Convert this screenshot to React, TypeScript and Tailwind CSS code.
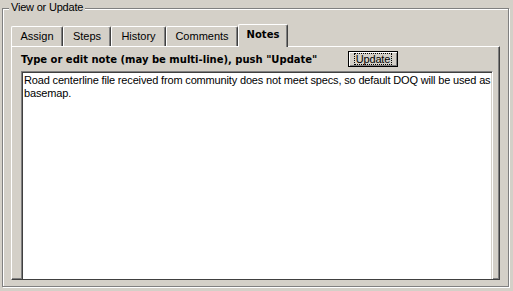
import React from "react";

const tabs = [
  { label: "Assign", w: "w-[52px]" },
  { label: "Steps", w: "w-[48px]" },
  { label: "History", w: "w-[55px]" },
  { label: "Comments", w: "w-[72px]" },
];

export default function App() {
  return (
    <div className="w-[513px] h-[291px] bg-[#d4d0c8] pt-[8px] pl-[2px] font-['Liberation_Sans',Arial,sans-serif] text-[11px] leading-[13px] text-black">
      {/* group box */}
      <div className="relative w-[507px] h-[279px] border border-[#808080] shadow-[inset_1px_1px_0_#fff,1px_1px_0_#fff]">
        <span className="absolute left-[6px] -top-[8px] bg-[#d4d0c8] px-[2px] tracking-[-0.2px]">View or Update</span>

        {/* tab strip */}
        <div className="ml-[8px] mt-[15px] flex items-end h-[22px]">
          {tabs.map((t) => (
            <div
              key={t.label}
              className={`${t.w} h-[20px] flex justify-center pt-[3px] border-l border-t border-r border-l-white border-t-white border-r-[#404040] rounded-t-[2px] shadow-[inset_-1px_0_0_#808080]`}
            >
              {t.label}
            </div>
          ))}
          <div className="relative z-10 -mb-px w-[50px] h-[23px] flex justify-center pt-[3px] font-['DejaVu_Sans',sans-serif] text-[10px] font-bold bg-[#d4d0c8] border-l border-t border-r border-l-white border-t-white border-r-[#404040] rounded-t-[2px] shadow-[inset_-1px_0_0_#808080]">
            Notes
          </div>
        </div>

        {/* tab panel */}
        <div className="ml-[8px] w-[489px] h-[234px] overflow-hidden border border-l-white border-t-white border-r-[#404040] border-b-[#404040] shadow-[inset_-1px_-1px_0_#808080]">
          <div className="mt-[4px] ml-[9px] flex items-center h-[16px]">
            <span className="w-[327px] pt-[1px] font-['DejaVu_Sans',sans-serif] text-[10px] font-bold whitespace-nowrap">
              Type or edit note (may be multi-line), push "Update"
            </span>
            <button className="w-[50px] h-[16px] flex items-center justify-center border border-black bg-[#d4d0c8] shadow-[inset_1px_1px_0_#fff,inset_-1px_-1px_0_#808080]">
              <span className="border border-dotted border-black px-[1px] leading-[10px] tracking-[-0.2px]">Update</span>
            </button>
          </div>
          <div className="mt-[4px] ml-[9px] w-[472px] h-[220px] bg-white border border-l-[#808080] border-t-[#808080] border-r-white border-b-white shadow-[inset_1px_1px_0_#404040,inset_-1px_-1px_0_#d4d0c8] pt-[2px] pl-[2px] tracking-[-0.16px]">
            <div className="whitespace-nowrap">
              Road centerline file received from community does not meet specs, so default DOQ will be used as
            </div>
            <div>basemap.</div>
          </div>
        </div>
      </div>
    </div>
  );
}
